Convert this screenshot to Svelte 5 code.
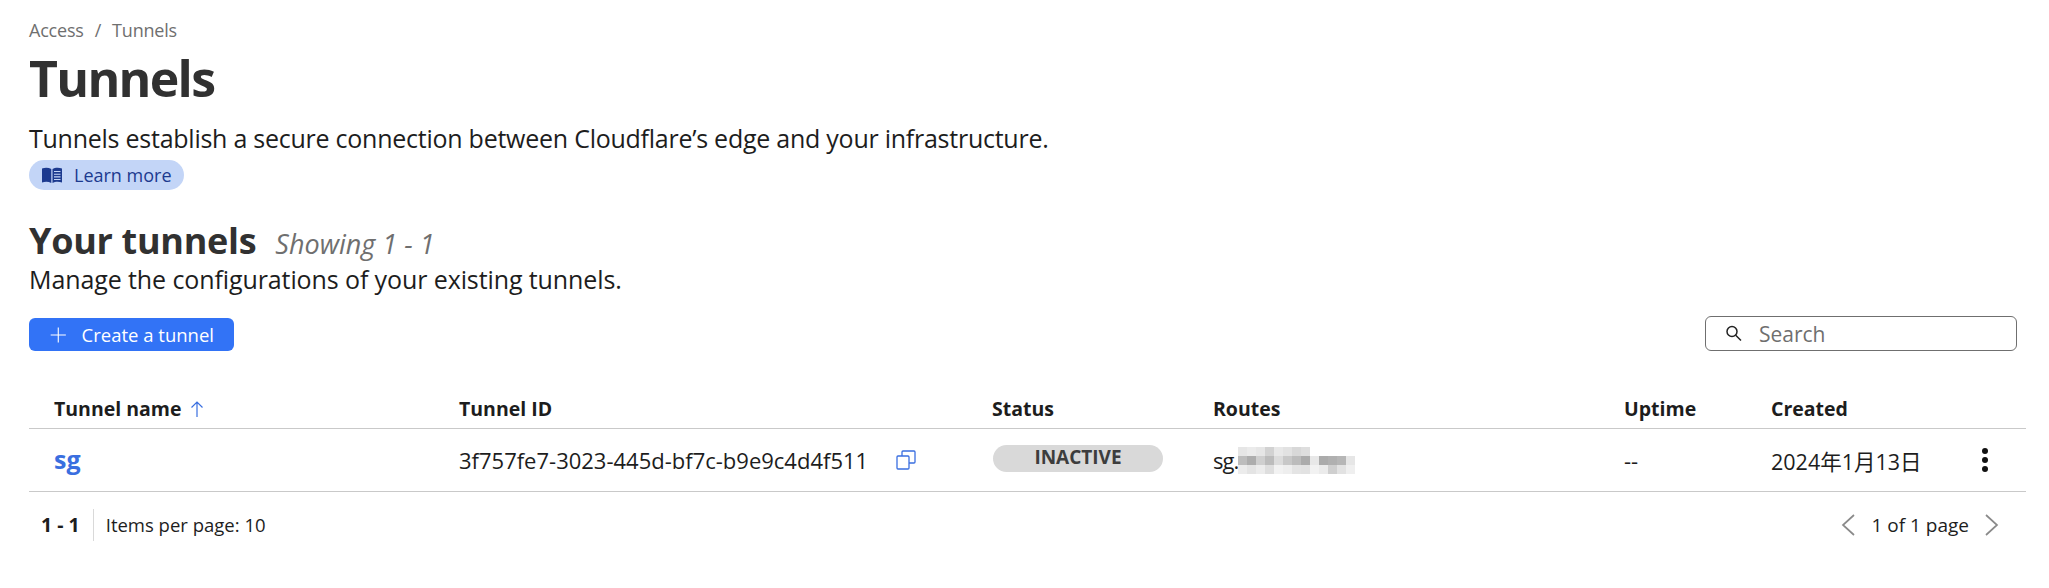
<script>
  const columns = ["Tunnel ID", "Status", "Routes", "Uptime", "Created"];
  // pixelated part of the route hostname, one row of blocks per line
  const blur = [
    ["#e6e6e6","#ebebeb","#e6e6e6","#d2d2d2","#e8e8e8","#e2e2e2","#d8d8d8","#dedede","#fff","#fff","#fff","#fff","#fff"],
    ["#bdbdbd","#adadad","#cfcfcf","#bcbcbc","#dcdcdc","#c8c8c8","#bcbcbc","#ababab","#e8e8e8","#ababab","#b0b0b0","#b6b6b6","#e6e6e6"],
    ["#ececec","#e4e4e4","#ececec","#dedede","#f2f2f2","#eeeeee","#e4e4e4","#e2e2e2","#f2f2f2","#ebebeb","#cfcfcf","#e2e2e2","#efefef"]
  ];
</script>

<main class="page">
  <nav class="crumbs"><span>Access</span><span class="sep">/</span><span>Tunnels</span></nav>
  <h1>Tunnels</h1>
  <p class="lead">Tunnels establish a secure connection between Cloudflare’s edge and your infrastructure.</p>
  <a class="pill" href="#learn">
    <svg width="20" height="16" viewBox="0 0 20 16">
      <path d="M0 1.500C3 .5 6.500 .5 9.300 2v14C6.500 14.500 3 14.500 0 15.500z" fill="#1c3a8f"/>
      <path d="M10.500 2C13 .5 17 .5 20 1.500v14c-3-1-7-1-9.500.5z" fill="#1c3a8f"/>
      <path d="M12 4.500h6.500M12 7.200h6.500M12 9.900h6.500M12 12.500h6.500" stroke="#c3d5f7" stroke-width="1.100"/>
    </svg>
    Learn more
  </a>

  <div class="section-title">
    <h2>Your tunnels</h2>
    <em>Showing 1 - 1</em>
  </div>
  <p class="sub">Manage the configurations of your existing tunnels.</p>

  <div class="toolbar">
    <button class="create">
      <svg width="22" height="22" viewBox="0 0 22 22"><path d="M11 2v18M2 11h18" stroke="#fff" stroke-width="1.300"/></svg>
      Create a tunnel
    </button>
    <label class="search">
      <svg width="20" height="20" viewBox="0 0 20 20" fill="none" stroke="#222" stroke-width="1.500">
        <circle cx="8" cy="7.500" r="5"/><path d="M11.700 11.200l5.300 5.300"/>
      </svg>
      <span>Search</span>
    </label>
  </div>

  <div class="row head">
    <div class="name">Tunnel name
      <svg width="16" height="18" viewBox="0 0 16 18" fill="none" stroke="#3a6fe0" stroke-width="1.200"><path d="M8 17V2M2.500 7.500L8 2l5.500 5.500"/></svg>
    </div>
    {#each columns as col}<div>{col}</div>{/each}
    <div></div>
  </div>

  <div class="row body">
    <a class="name link" href="#sg">sg</a>
    <div class="id">3f757fe7-3023-445d-bf7c-b9e9c4d4f511
      <svg width="20" height="20" viewBox="0 0 20 20" fill="none" stroke="#3a6fe0" stroke-width="1.300">
        <rect x="1" y="6" width="12" height="13" rx="1"/>
        <path d="M6 6V2a1 1 0 0 1 1-1h11a1 1 0 0 1 1 1v10a1 1 0 0 1-1 1h-5"/>
      </svg>
    </div>
    <div><span class="badge">INACTIVE</span></div>
    <div class="route">sg.<span class="mosaic">
      {#each blur as line}{#each line as c}<i style="background:{c}"></i>{/each}{/each}
    </span></div>
    <div>--</div>
    <div class="date">2024年1月13日</div>
    <div class="kebab"><b></b><b></b><b></b></div>
  </div>

  <footer>
    <div class="counts">
      <strong>1 - 1</strong>
      <span>Items per page: 10</span>
    </div>
    <div class="pager">
      <svg width="16" height="22" viewBox="0 0 16 22" fill="none" stroke="#8a8a8a" stroke-width="1.700"><path d="M14 1L3 11l11 10"/></svg>
      <span>1 of 1 page</span>
      <svg width="16" height="22" viewBox="0 0 16 22" fill="none" stroke="#8a8a8a" stroke-width="1.700"><path d="M2 1l11 10L2 21"/></svg>
    </div>
  </footer>
</main>

<style>
  :global(body) {
    background: #fff;
  }
  .page {
    font-family: "Open Sans", "Noto Sans CJK SC", sans-serif;
    color: #1d1d1d;
    padding: 18px 0 0 29px;
    width: 1997px;
  }
  .crumbs {
    display: flex;
    gap: 11px;
    font-size: 18px;
    line-height: 24px;
    letter-spacing: -0.2px;
    color: #6f6f6f;
  }
  h1 {
    margin: 4px 0 0;
    font-size: 50px;
    line-height: 64px;
    font-weight: 700;
    letter-spacing: -1.7px;
    color: #313131;
  }
  .lead {
    margin: 12px 0 0;
    font-size: 25px;
    line-height: 32px;
    letter-spacing: -0.25px;
  }
  .pill {
    display: inline-flex;
    align-items: center;
    gap: 12px;
    height: 30px;
    margin-top: 6px;
    padding: 0 12px 0 13px;
    border-radius: 15px;
    background: #c3d5f7;
    color: #1c3a8f;
    font-size: 18px;
    text-decoration: none;
  }
  .section-title {
    display: flex;
    align-items: baseline;
    gap: 19px;
    margin-top: 28px;
  }
  h2 {
    margin: 0;
    font-size: 36px;
    line-height: 46px;
    font-weight: 700;
    letter-spacing: -0.3px;
    color: #313131;
  }
  em {
    font-size: 27px;
    color: #6f6f6f;
  }
  .sub {
    margin: -1px 0 0;
    font-size: 25px;
    line-height: 32px;
    letter-spacing: -0.1px;
  }
  .toolbar {
    display: flex;
    justify-content: space-between;
    align-items: center;
    margin-top: 21px;
    padding-right: 9px;
  }
  .create {
    display: flex;
    align-items: center;
    gap: 14px;
    width: 205px;
    height: 33px;
    margin-top: 2px;
    padding: 0 20px;
    border: 0;
    border-radius: 6px;
    background: #3273f6;
    color: #fff;
    font: 18.500px "Open Sans", sans-serif;
    white-space: nowrap;
  }
  .search {
    display: flex;
    align-items: center;
    gap: 15px;
    width: 312px;
    height: 35px;
    box-sizing: border-box;
    padding: 0 18px;
    border: 1px solid #6f6f6f;
    border-radius: 6px;
    color: #6f6f6f;
    font-size: 21px;
  }
  .row {
    display: grid;
    grid-template-columns: 405px 533px 221px 411px 147px 210px 1fr;
    padding-left: 25px;
    align-items: center;
  }
  .head {
    box-sizing: border-box;
    height: 52px;
    margin-top: 26px;
    padding-top: 12px;
    border-bottom: 1px solid #c9c9c9;
    font-size: 19.500px;
    font-weight: 700;
    color: #1d1d1d;
  }
  .head .name {
    display: flex;
    align-items: center;
    gap: 7px;
  }
  .body {
    height: 62px;
    border-bottom: 1px solid #c9c9c9;
    font-size: 22px;
  }
  .link {
    margin-top: -3px;
    color: #3a6fe0;
    font-size: 25px;
    font-weight: 700;
    text-decoration: none;
  }
  .id {
    display: flex;
    align-items: center;
    gap: 28px;
    white-space: nowrap;
  }
  .badge {
    display: block;
    width: 170px;
    height: 27px;
    margin: -3px 0 0 1px;
    border-radius: 14px;
    background: #d9d9d9;
    color: #3d3d3d;
    font-size: 19px;
    font-weight: 700;
    line-height: 24px;
    text-align: center;
  }
  .route {
    display: flex;
    align-items: center;
    letter-spacing: -1px;
  }
  .mosaic {
    display: grid;
    grid-template-columns: repeat(13, 9px);
    grid-auto-rows: 9px;
  }
  .date {
    font-size: 21.500px;
    white-space: nowrap;
  }
  .kebab {
    display: flex;
    flex-direction: column;
    align-items: center;
    gap: 3px;
    width: 8px;
  }
  .kebab b {
    width: 6px;
    height: 6px;
    border-radius: 50%;
    background: #111;
  }
  footer {
    display: flex;
    justify-content: space-between;
    align-items: center;
    height: 65px;
    font-size: 18.500px;
  }
  .counts {
    display: flex;
    align-items: center;
    height: 32px;
    padding-left: 12px;
  }
  .counts strong {
    padding-right: 13px;
    border-right: 1px solid #d9d9d9;
    font-size: 19.500px;
    line-height: 32px;
  }
  .counts span {
    padding-left: 12px;
  }
  .pager {
    display: flex;
    align-items: center;
    gap: 15px;
    padding-right: 26px;
    font-size: 19px;
  }
</style>
